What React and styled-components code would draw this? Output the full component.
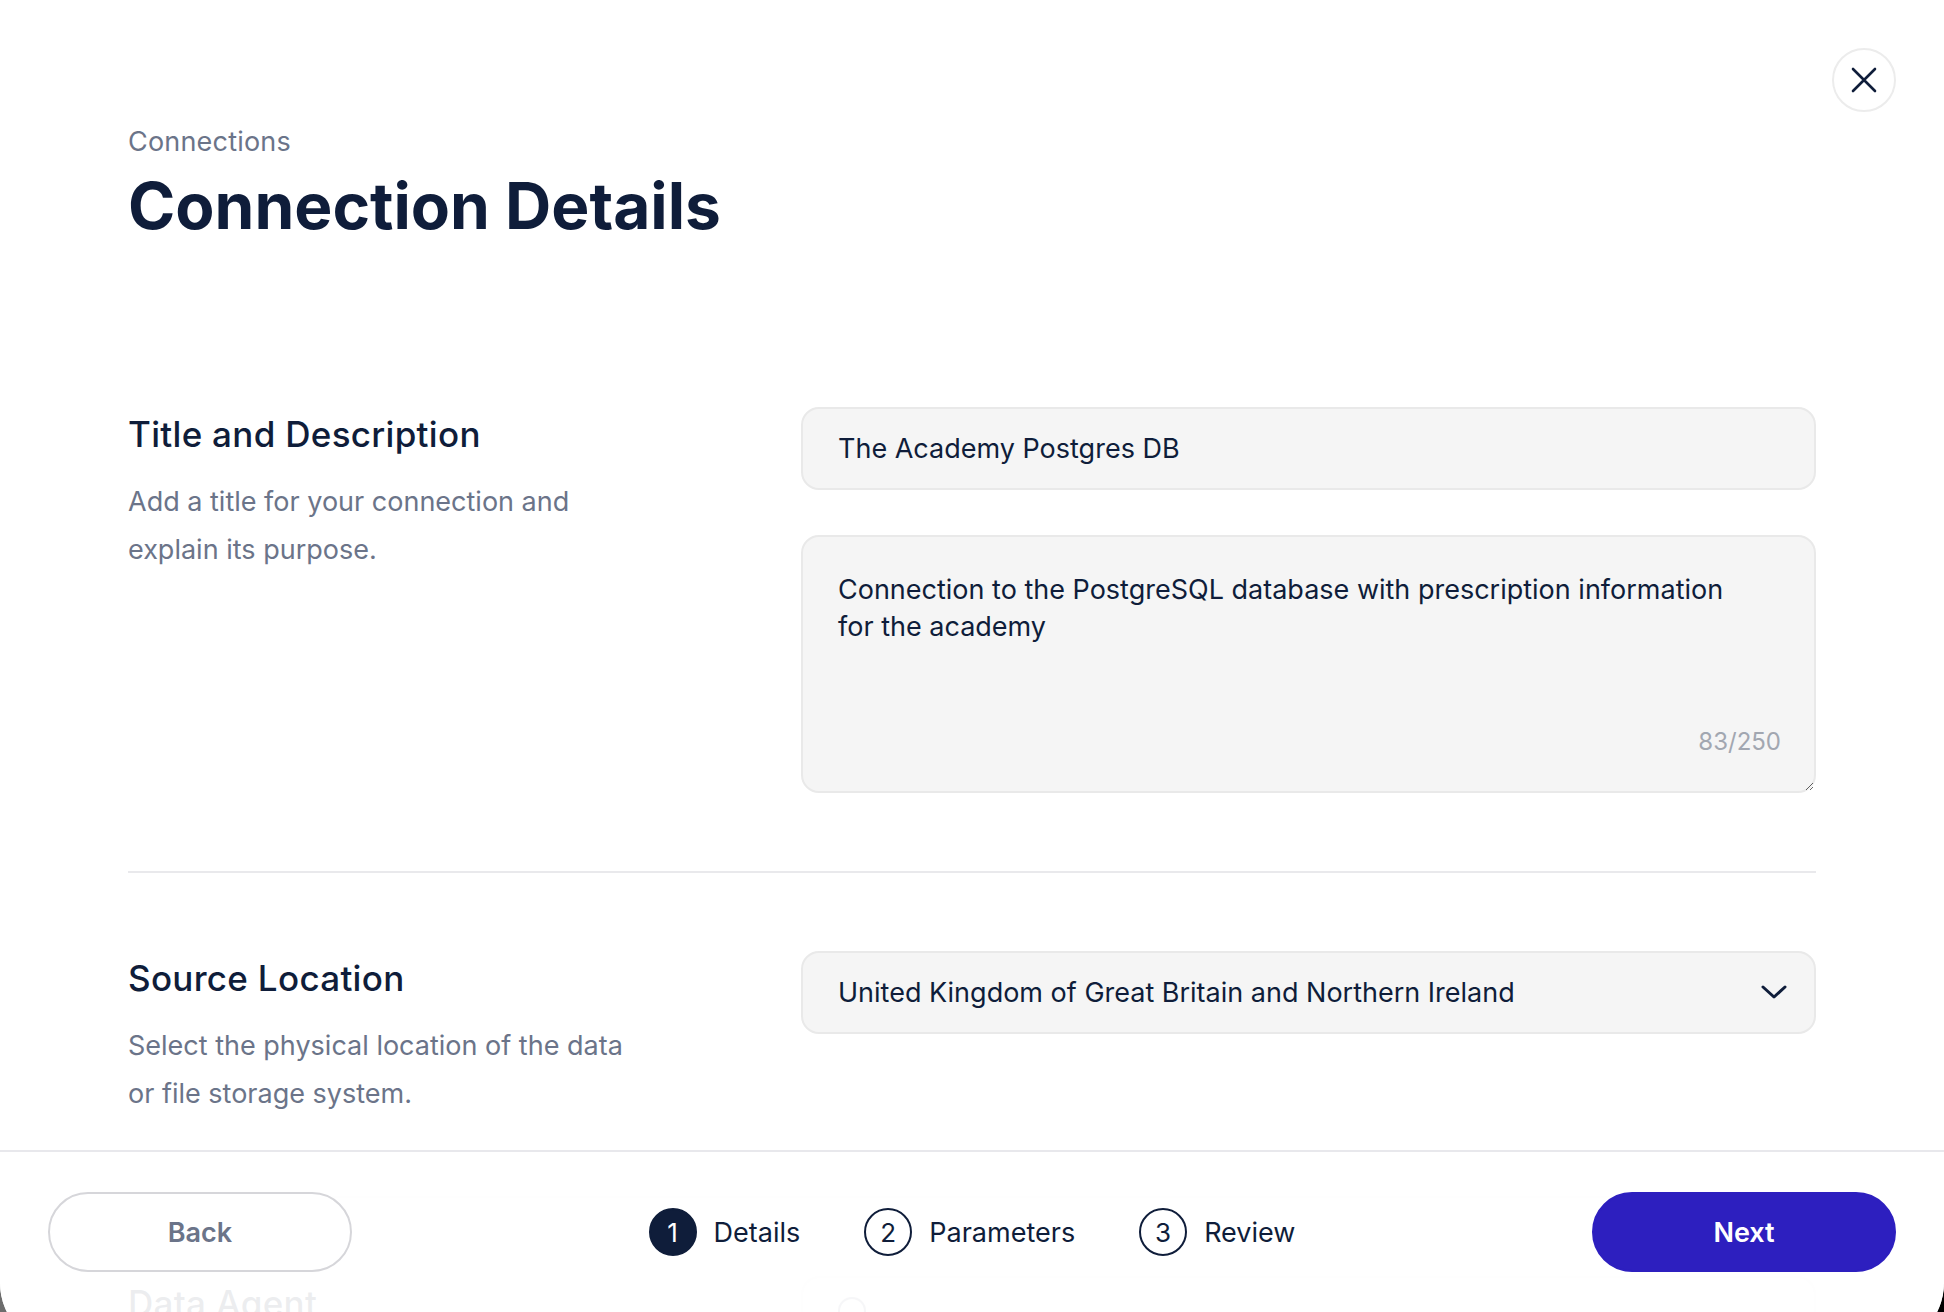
import React from 'react'
import styled, {createGlobalStyle} from 'styled-components'

const GlobalStyle = createGlobalStyle`
  html, body {
    margin: 0;
    padding: 0;
    height: 100%;
    overflow: hidden;
    background: linear-gradient(90deg, #6d6d6d, #000000);
    font-family: Inter, "Noto Sans", sans-serif;
    -webkit-font-smoothing: antialiased;
  }
  * { box-sizing: border-box; }
`

const navy = '#0f1d3a'
const slate = '#6b7489'

const Modal = styled.div`
  position: relative;
  height: calc(100vh + 35px);
  background: #ffffff;
  border-radius: 0 0 64px 64px;
  overflow: hidden;
`

const CloseButton = styled.button`
  position: absolute;
  top: 48px;
  right: 48px;
  width: 64px;
  height: 64px;
  border-radius: 50%;
  border: 2px solid #ececec;
  background: #fff;
  display: grid;
  place-items: center;
  padding: 0;
  cursor: pointer;
`

const Content = styled.div`
  padding: 124px 128px 0;
`

const Header = styled.header`
  padding-bottom: 82px;
`

const Crumb = styled.div`
  font-size: 27px;
  line-height: 36px;
  letter-spacing: 0.2px;
  color: ${slate};
`

const Title = styled.h1`
  margin: 8px 0 0;
  font-size: 64px;
  line-height: 1.2;
  font-weight: 700;
  color: ${navy};
`

const Section = styled.section`
  display: grid;
  grid-template-columns: minmax(0, 1fr) 1015px;
  padding: 78px 0;
  border-top: ${p => (p.$first ? 'none' : '2px solid #e9e9ec')};
  ${p => p.$first && 'padding-top: 80px;'}
`

const SideText = styled.div`
  max-width: 512px;
`

const SectionTitle = styled.h2`
  margin: 0;
  font-size: 35px;
  line-height: 54px;
  font-weight: 500;
  letter-spacing: 0.3px;
  color: ${navy};
`

const SectionDesc = styled.p`
  margin: 17px 0 0;
  font-size: 27px;
  line-height: 48px;
  color: ${slate};
`

const Fields = styled.div`
  display: flex;
  flex-direction: column;
  gap: 45px;
`

const Field = styled.div`
  height: 83px;
  display: flex;
  align-items: center;
  justify-content: space-between;
  padding: 0 27px 0 35px;
  background: #f5f5f5;
  border: 2px solid #e9e9e9;
  border-radius: 18px;
  font-size: 27px;
  color: ${navy};
`

const AreaWrap = styled.div`
  position: relative;
`

const TextArea = styled.textarea`
  display: block;
  width: 100%;
  height: 258px;
  padding: 34px 66px 36px 35px;
  background: #f5f5f5;
  border: 2px solid #e9e9e9;
  border-radius: 18px;
  font-family: inherit;
  font-size: 27px;
  line-height: 37px;
  color: ${navy};
  resize: vertical;
  outline: none;
`

const Counter = styled.span`
  position: absolute;
  right: 35px;
  bottom: 37px;
  font-size: 24px;
  color: #a2a7b1;
`

const Card = styled.div`
  height: 140px;
  padding: 19px 35px;
  background: #f5f5f5;
  border: 2px solid #e9e9e9;
  border-radius: 18px;
`

const Radio = styled.span`
  display: block;
  width: 28px;
  height: 28px;
  border-radius: 50%;
  border: 2px solid #8a90a0;
`

const Footer = styled.footer`
  position: absolute;
  left: 0;
  right: 0;
  bottom: 0;
  height: 197px;
  padding: 40px 48px 0;
  border-top: 2px solid #e8e8ec;
  background: rgba(255, 255, 255, 0.92);
  display: flex;
  align-items: flex-start;
  justify-content: space-between;
`

const PillButton = styled.button`
  width: 304px;
  height: 80px;
  border-radius: 40px;
  font-family: inherit;
  font-size: 27px;
  font-weight: 600;
  cursor: pointer;
  border: 2px solid ${p => (p.$primary ? '#2d1fbf' : '#d6d6da')};
  background: ${p => (p.$primary ? '#2d1fbf' : '#ffffff')};
  color: ${p => (p.$primary ? '#ffffff' : slate)};
`

const Stepper = styled.ol`
  display: flex;
  align-items: center;
  gap: 64px;
  margin: 0;
  padding: 0;
  height: 80px;
  list-style: none;
`

const Step = styled.li`
  display: flex;
  align-items: center;
  gap: 17px;
  font-size: 27px;
  color: ${navy};
`

const StepNum = styled.span`
  width: 48px;
  height: 48px;
  border-radius: 50%;
  display: grid;
  place-items: center;
  font-size: 26px;
  border: 2px solid ${navy};
  background: ${p => (p.$active ? navy : 'transparent')};
  color: ${p => (p.$active ? '#fff' : navy)};
`

const steps = ['Details', 'Parameters', 'Review']

const description =
  'Connection to the PostgreSQL database with prescription information for the academy'

export default function App() {
  return (
    <>
      <GlobalStyle />
      <Modal>
        <CloseButton aria-label="Close">
          <svg width="26" height="26" viewBox="0 0 26 26">
            <path d="M2 2 L24 24 M24 2 L2 24" stroke={navy} strokeWidth="2.6" strokeLinecap="round" />
          </svg>
        </CloseButton>

        <Content>
          <Header>
            <Crumb>Connections</Crumb>
            <Title>Connection Details</Title>
          </Header>

          <Section $first>
            <SideText>
              <SectionTitle>Title and Description</SectionTitle>
              <SectionDesc>Add a title for your connection and explain its purpose.</SectionDesc>
            </SideText>
            <Fields>
              <Field>The Academy Postgres DB</Field>
              <AreaWrap>
                <TextArea readOnly value={description} />
                <Counter>{description.length}/250</Counter>
              </AreaWrap>
            </Fields>
          </Section>

          <Section>
            <SideText>
              <SectionTitle>Source Location</SectionTitle>
              <SectionDesc>Select the physical location of the data or file storage system.</SectionDesc>
            </SideText>
            <Fields>
              <Field>
                United Kingdom of Great Britain and Northern Ireland
                <svg width="26" height="14" viewBox="0 0 26 14">
                  <path d="M2 2 L13 12 L24 2" fill="none" stroke={navy} strokeWidth="3" strokeLinecap="round" strokeLinejoin="round" />
                </svg>
              </Field>
            </Fields>
          </Section>

          <Section>
            <SideText>
              <SectionTitle>Data Agent</SectionTitle>
            </SideText>
            <Card>
              <Radio />
            </Card>
          </Section>
        </Content>

        <Footer>
          <PillButton>Back</PillButton>
          <Stepper>
            {steps.map((s, i) => (
              <Step key={s}>
                <StepNum $active={i === 0}>{i + 1}</StepNum>
                {s}
              </Step>
            ))}
          </Stepper>
          <PillButton $primary>Next</PillButton>
        </Footer>
      </Modal>
    </>
  )
}
